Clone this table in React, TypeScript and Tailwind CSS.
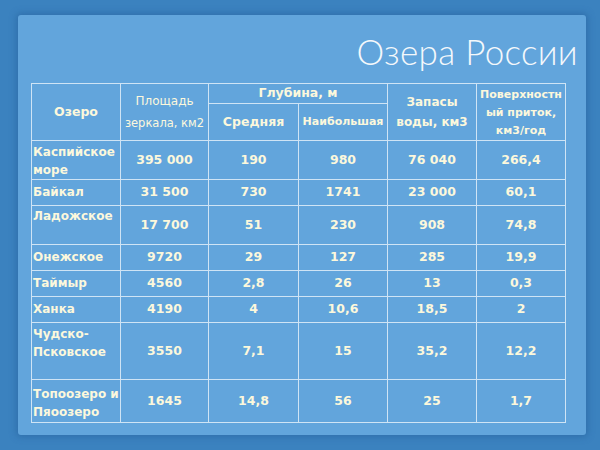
import React from "react";

interface Lake {
    name: React.ReactNode;
    area: string;
    avg: string;
    max: string;
    volume: string;
    inflow: string;
    h: string;
    pt: string;
}

const lakes: Lake[] = [
    { name: <>Каспийское<br />море</>, area: "395 000", avg: "190", max: "980", volume: "76 040", inflow: "266,4", h: "h-[38px]", pt: "pt-[2px]" },
    { name: "Байкал", area: "31 500", avg: "730", max: "1741", volume: "23 000", inflow: "60,1", h: "h-[26px]", pt: "pt-[3px]" },
    { name: "Ладожское", area: "17 700", avg: "51", max: "230", volume: "908", inflow: "74,8", h: "h-[39px]", pt: "pt-[1px]" },
    { name: "Онежское", area: "9720", avg: "29", max: "127", volume: "285", inflow: "19,9", h: "h-[26px]", pt: "pt-[3px]" },
    { name: "Таймыр", area: "4560", avg: "2,8", max: "26", volume: "13", inflow: "0,3", h: "h-[26px]", pt: "pt-[3px]" },
    { name: "Ханка", area: "4190", avg: "4", max: "10,6", volume: "18,5", inflow: "2", h: "h-[26px]", pt: "pt-[3px]" },
    { name: <>Чудско-<br />Псковское</>, area: "3550", avg: "7,1", max: "15", volume: "35,2", inflow: "12,2", h: "h-[57px]", pt: "pt-[2px]" },
    { name: <>Топоозеро и<br />Пяоозеро</>, area: "1645", avg: "14,8", max: "56", volume: "25", inflow: "1,7", h: "h-[43px]", pt: "pt-[5px]" },
];

const cell = "border border-[#cfe4f5] p-0 text-center align-middle whitespace-nowrap";

const App: React.FC = () => {
    return (
        <div className="w-[600px] h-[450px] bg-[#3b82bf] pl-[18px] pr-[14px] pt-[15px] pb-[15px] overflow-hidden">
            <div className="h-full bg-[#62a5dc] rounded-[3px] shadow-[0_0_6px_2px_rgba(40,100,160,0.6)] pl-[13px] pt-[15px]">
                <div className="flex justify-end pr-[8px]">
                    <h1 className="text-[35px] leading-[42px] font-light text-[#f4f8fb] font-['Lato',sans-serif] tracking-[0.3px]">
                        Озера России
                    </h1>
                </div>
                <table className="mt-[11px] border-collapse table-fixed w-[534px] text-[12.5px] text-[#fcf8dc] font-['DejaVu_Sans',sans-serif]">
                    <colgroup>
                        <col className="w-[89px]" />
                        <col className="w-[88px]" />
                        <col className="w-[90px]" />
                        <col className="w-[89px]" />
                        <col className="w-[89px]" />
                        <col className="w-[89px]" />
                    </colgroup>
                    <thead>
                        <tr className="h-[19px]">
                            <th rowSpan={2} className={`${cell} font-bold`}>Озеро</th>
                            <th rowSpan={2} className={`${cell} font-normal leading-[22px] text-[12px]`}>
                                Площадь
                                <br />
                                <span className="text-[11.5px]">зеркала, км2</span>
                            </th>
                            <th colSpan={2} className={`${cell} font-bold`}>Глубина, м</th>
                            <th rowSpan={2} className={`${cell} font-semibold leading-[20px] text-[12px]`}>
                                Запасы
                                <br />
                                воды, км3
                            </th>
                            <th rowSpan={2} className={`${cell} font-semibold leading-[18px] text-[11px] pt-[2px] align-top`}>
                                Поверхностн
                                <br />
                                ый приток,
                                <br />
                                км3/год
                            </th>
                        </tr>
                        <tr className="h-[37px]">
                            <th className={`${cell} font-bold`}>Средняя</th>
                            <th className={`${cell} font-semibold text-[11px]`}>Наибольшая</th>
                        </tr>
                    </thead>
                    <tbody>
                        {lakes.map((l, i) => (
                            <tr key={i} className={l.h}>
                                <td className={`border border-[#cfe4f5] p-0 pl-[1px] text-left align-top font-bold leading-[18px] text-[12px] whitespace-nowrap ${l.pt}`}>
                                    {l.name}
                                </td>
                                <td className={`${cell} font-semibold`}>{l.area}</td>
                                <td className={`${cell} font-semibold`}>{l.avg}</td>
                                <td className={`${cell} font-semibold`}>{l.max}</td>
                                <td className={`${cell} font-semibold`}>{l.volume}</td>
                                <td className={`${cell} font-semibold`}>{l.inflow}</td>
                            </tr>
                        ))}
                    </tbody>
                </table>
            </div>
        </div>
    );
};

export default App;
